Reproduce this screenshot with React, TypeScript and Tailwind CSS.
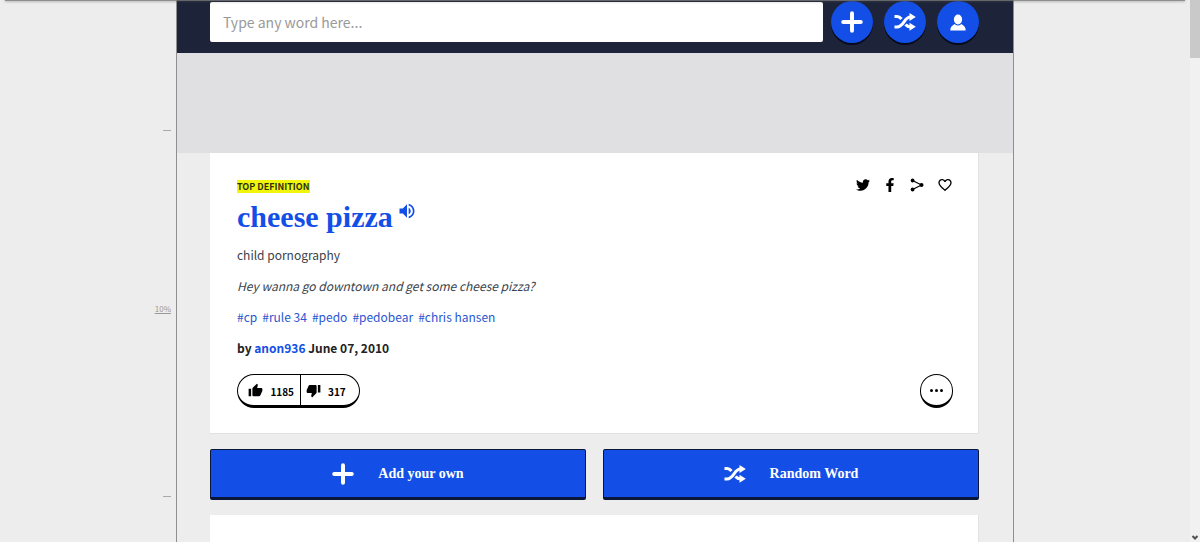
import { FaFacebookF, FaTwitter } from "react-icons/fa";
import { MdFavoriteBorder, MdThumbDown, MdThumbUp, MdVolumeUp } from "react-icons/md";

const tags = ["#cp", "#rule 34", "#pedo", "#pedobear", "#chris hansen"];

function PlusIcon({ className }: { className?: string }) {
  return (
    <svg viewBox="0 0 20 20" className={className} fill="none" stroke="currentColor" strokeWidth="3.6" strokeLinecap="round">
      <path d="M10 2v16M2 10h16" />
    </svg>
  );
}

function ShuffleIcon({ className }: { className?: string }) {
  return (
    <svg viewBox="0 0 22 18" className={className} fill="none" stroke="currentColor" strokeWidth="3">
      <path d="M0.500 3.500H3C5 3.500 6.300 4.600 7.500 6" />
      <path d="M0.500 14H3C10 14 10 4 16.500 4" />
      <path d="M11.500 11.500C12.700 13 14.200 13.800 16.500 13.800" />
      <path d="M15.500 0L21.800 4L15.500 8zM15.500 9.800L21.800 13.800L15.500 17.800z" fill="currentColor" stroke="none" />
    </svg>
  );
}

function UserIcon({ className }: { className?: string }) {
  return (
    <svg viewBox="0 0 16 18" className={className} fill="currentColor">
      <ellipse cx="8" cy="6.500" rx="4.100" ry="5" />
      <path d="M0.300 17.500C0.300 14.300 1.600 13 4.600 11Q8 14 11.400 11C14.400 13 15.700 14.300 15.700 17.500z" />
    </svg>
  );
}

function ShareIcon({ className }: { className?: string }) {
  return (
    <svg viewBox="0 0 14 14" className={className} fill="currentColor">
      <path d="M2.500 2.500L11.500 7L2.500 11.500" fill="none" stroke="currentColor" strokeWidth="1.200" />
      <circle cx="2.600" cy="2.500" r="1.900" />
      <circle cx="11.500" cy="7" r="2" />
      <circle cx="2.600" cy="11.500" r="1.900" />
    </svg>
  );
}

const headerButtons = [
  { label: "Add", icon: PlusIcon, size: "size-[22px]" },
  { label: "Random", icon: ShuffleIcon, size: "h-[18px] w-[22px]" },
  { label: "Account", icon: UserIcon, size: "h-[18px] w-4" },
];

const shareLinks = [
  { label: "Twitter", icon: FaTwitter, size: "size-[14px]" },
  { label: "Facebook", icon: FaFacebookF, size: "size-[14px]" },
  { label: "Share", icon: ShareIcon, size: "size-[14px]" },
  { label: "Favorite", icon: MdFavoriteBorder, size: "size-4" },
];

const actions = [
  { label: "Add your own", icon: PlusIcon, size: "size-[22px]" },
  { label: "Random Word", icon: ShuffleIcon, size: "h-[18px] w-[22px]" },
];

function Header() {
  return (
    <header className="flex items-start gap-2 bg-[#1d2439] pt-px pr-[34px] pb-[10px] pl-[33px]">
      <input
        type="text"
        aria-label="Search"
        placeholder="Type any word here..."
        className="mt-px h-10 min-w-0 flex-1 rounded-xs bg-white px-[13px] text-[14px] text-[#333] placeholder:text-[#999]"
      />
      <nav className="flex gap-[11px]">
        {headerButtons.map(({ label, icon: Icon, size }) => (
          <button
            key={label}
            aria-label={label}
            className="flex size-[42px] items-center justify-center rounded-full bg-[#134fe6] text-white shadow-[0_2px_0_#060a1c]"
          >
            <Icon className={size} />
          </button>
        ))}
      </nav>
    </header>
  );
}

function Definition() {
  return (
    <article className="border-r border-b border-[#e2e2e4] bg-white pt-[27px] pr-[25px] pb-[25px] pl-[27px] text-[12px] leading-5 text-[#3a3f4a]">
      <div className="flex items-start justify-between">
        <span className="bg-[#f0f50b] text-[9px] leading-[13px] font-bold text-[#2d3014]">TOP DEFINITION</span>
        <div className="flex gap-[13px] text-black">
          {shareLinks.map(({ label, icon: Icon, size }) => (
            <a key={label} href="#" aria-label={label} className="flex h-[10px] items-center">
              <Icon className={size} />
            </a>
          ))}
        </div>
      </div>

      <div className="mt-1 flex items-start gap-1 text-[#134fe6]">
        <h1 className="font-['Liberation_Serif',serif] text-[30px] leading-10 font-bold">
          <a href="#">cheese pizza</a>
        </h1>
        <button aria-label="Play sound" className="mt-1">
          <MdVolumeUp className="size-5" />
        </button>
      </div>

      <div className="mt-2 flex flex-col gap-[11px]">
        <p>child pornography</p>
        <p className="italic">Hey wanna go downtown and get some cheese pizza?</p>
        <div className="flex gap-[5px] text-[#2a56cf]">
          {tags.map((tag) => (
            <a key={tag} href="#">{tag}</a>
          ))}
        </div>
        <p className="font-bold text-[#222]">
          by <a href="#" className="text-[#134fe6]">anon936</a> June 07, 2010
        </p>
      </div>

      <div className="mt-4 flex items-center justify-between text-black">
        <div className="flex h-[34px] rounded-full border border-b-3 border-black text-[10px] font-bold">
          <button aria-label="Thumbs up" className="flex w-[63px] items-center justify-end gap-[7px] border-r border-black pr-[6px]">
            <MdThumbUp className="size-[15px]" />
            <span className="pt-[3px]">1185</span>
          </button>
          <button aria-label="Thumbs down" className="flex w-[58px] items-center gap-[7px] pl-[5px]">
            <MdThumbDown className="size-[15px]" />
            <span className="pt-[3px]">317</span>
          </button>
        </div>
        <button aria-label="More" className="flex h-[34px] w-[33px] items-center justify-center gap-[2px] rounded-full border border-b-3 border-black">
          <span className="size-[3px] rounded-full bg-black" />
          <span className="size-[3px] rounded-full bg-black" />
          <span className="size-[3px] rounded-full bg-black" />
        </button>
      </div>
    </article>
  );
}

export default function App() {
  return (
    <div className="relative flex h-screen overflow-hidden bg-[#ededed] font-['Noto_Sans_CJK_SC',sans-serif]">
      {/* Reading progress ruler */}
      <aside className="flex flex-1 flex-col items-end pt-[130px] pr-[5px] text-[8px] leading-3 text-[#999]">
        <span className="h-px w-2 bg-[#aaa]" />
        <span className="mt-[172px] underline">10%</span>
        <span className="mt-[181px] h-px w-2 bg-[#aaa]" />
      </aside>

      <div className="min-w-0 basis-[838px] border-x border-[#8f8f8f]">
        <Header />
        <div className="h-[100px] bg-[#e0e0e2]" />
        <main className="pr-[34px] pl-[33px]">
          <Definition />
          <div className="my-[15px] grid grid-cols-2 gap-[17px]">
            {actions.map(({ label, icon: Icon, size }) => (
              <button
                key={label}
                className="flex h-[51px] items-center justify-center gap-6 rounded-xs border border-b-3 border-[#0a1638] bg-[#134fe6] font-['Liberation_Serif',serif] text-[14px] font-bold text-white"
              >
                <Icon className={size} />
                <span>{label}</span>
              </button>
            ))}
          </div>
          <article className="h-40 border-r border-[#e2e2e4] bg-white" />
        </main>
      </div>

      <div className="flex-1 pl-[5px]" />

      {/* Scrollbar */}
      <div className="flex w-[10px] flex-col items-center justify-between bg-[#f1f1f1]">
        <div className="h-[58px] w-full bg-[#c9c9c9]" />
        <svg viewBox="0 0 8 8" className="size-2" fill="none" stroke="#505050" strokeWidth="2">
          <path d="M1.500 2L4 4.500L6.500 2" />
        </svg>
      </div>

      {/* Shadow of the bar above the page */}
      <div className="absolute top-0 right-[15px] left-[5px] h-px bg-[#777]/80 shadow-[0_0_3px_#555]" />
    </div>
  );
}
